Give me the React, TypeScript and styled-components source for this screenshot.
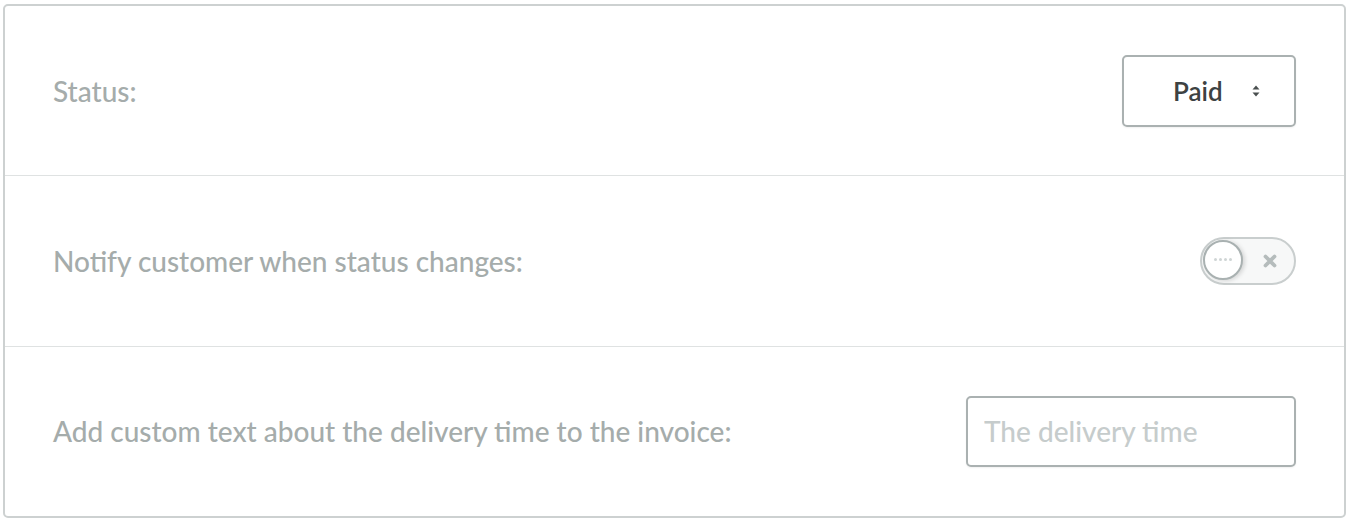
import React from "react";
import styled, { createGlobalStyle } from "styled-components";

const Global = createGlobalStyle`
  html, body { margin: 0; padding: 0; background: #ffffff; }
  body { font-family: Lato, "Open Sans", sans-serif; }
  * { box-sizing: border-box; }
`;

const Card = styled.div`
  margin: 4px 0 0 3px;
  width: 1343px;
  height: 514px;
  border: 2px solid #cdd1d1;
  border-radius: 5px;
  background: #fff;
  display: flex;
  flex-direction: column;
`;

const Row = styled.div<{ $last?: boolean }>`
  flex: 1;
  display: flex;
  align-items: center;
  justify-content: space-between;
  padding: 0 48px 0 48px;
  border-bottom: ${(p) => (p.$last ? "none" : "1.5px solid #dfe2e2")};
`;

const Label = styled.div`
  font-size: 28px;
  font-weight: 500;
  color: #a5acab;
`;

const SelectBox = styled.div`
  width: 174px;
  height: 72px;
  border: 2px solid #aab1b1;
  border-radius: 5px;
  display: flex;
  align-items: center;
  padding-left: 49px;
  gap: 28px;
  font-size: 26px;
  font-weight: 600;
  color: #3d4242;
  box-shadow: 0 1px 2px rgba(0, 0, 0, 0.06);
`;

const Toggle = styled.div`
  position: relative;
  width: 96px;
  height: 48px;
  border: 2px solid #c9cece;
  border-radius: 24px;
  background: #f7f8f8;
  display: flex;
  align-items: center;
  justify-content: flex-end;
  padding-right: 17px;
`;

const Knob = styled.div`
  position: absolute;
  left: 1px;
  top: 1px;
  width: 40px;
  height: 40px;
  border-radius: 50%;
  border: 2px solid #a9b1b1;
  background: #fff;
  box-shadow: 2px 1px 4px rgba(0, 0, 0, 0.14);
  display: flex;
  align-items: center;
  justify-content: center;
  gap: 2px;
`;

const Dot = styled.span`
  width: 3px;
  height: 3px;
  border-radius: 50%;
  background: #cfd5d5;
`;

const Input = styled.input`
  width: 330px;
  height: 71px;
  border: 2px solid #aab1b1;
  border-radius: 5px;
  padding: 0 16px;
  font-family: Lato, "Open Sans", sans-serif;
  font-size: 28px;
  font-weight: 500;
  color: #3d4242;
  outline: none;
  box-shadow: 0 1px 2px rgba(0, 0, 0, 0.06);
  &::placeholder { color: #c6cccc; }
`;

export default function App() {
  return (
    <>
      <Global />
      <Card>
        <Row>
          <Label>Status:</Label>
          <SelectBox>
            <span>Paid</span>
            <svg width="10" height="14" viewBox="0 0 10 14">
              <path d="M5 1.5 L8.5 5.5 L1.5 5.5 Z" fill="#4a4f4f" />
              <path d="M5 12.5 L8.5 8.5 L1.5 8.5 Z" fill="#4a4f4f" />
            </svg>
          </SelectBox>
        </Row>
        <Row>
          <Label>Notify customer when status changes:</Label>
          <Toggle>
            <Knob>
              <Dot />
              <Dot />
              <Dot />
              <Dot />
            </Knob>
            <svg width="14" height="14" viewBox="0 0 14 14">
              <path d="M2.5 2.5 L11.5 11.5 M11.5 2.5 L2.5 11.5" stroke="#b5bcbc" strokeWidth="3.8" strokeLinecap="round" />
            </svg>
          </Toggle>
        </Row>
        <Row $last>
          <Label>Add custom text about the delivery time to the invoice:</Label>
          <Input placeholder="The delivery time" />
        </Row>
      </Card>
    </>
  );
}
